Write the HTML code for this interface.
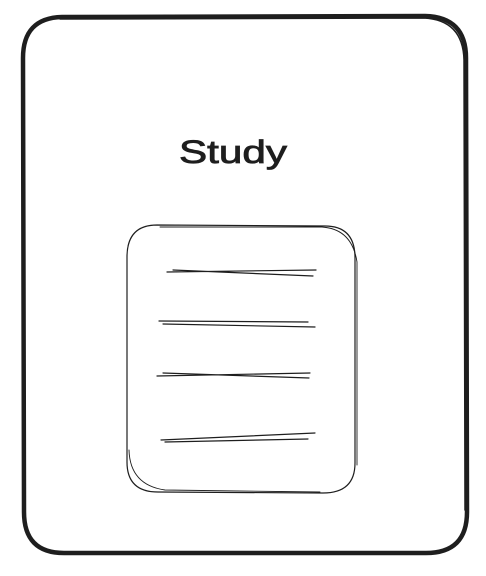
<!DOCTYPE html>
<html><head><style>html,body{margin:0;padding:0;background:#fff;width:486px;height:576px;overflow:hidden}</style></head>
<body>
<svg width="486" height="576" viewBox="0 0 486 576" xmlns="http://www.w3.org/2000/svg">
<g fill="none" stroke="#1e1e1e" stroke-linecap="round">
<path d="M62 17 L425 16 Q466 17 466 58 L467 512 Q467 553 426 553 L64 553 Q24 553 24 512 L23 58 Q23 18 62 17 Z" stroke-width="4.5"/>
<path d="M60 19 L424 18 Q463 20 464 60 L465 510" stroke-width="1.5"/>
<path d="M157 225 L325 226 Q355 226 355 258 L355 463 Q355 493 323 493 L158 492 Q127 492 127 462 L127 257 Q127 225 157 225 Z" stroke-width="1.2"/>
<path d="M160 227 L322 227 Q352 229 357 262 L357 465 M129 450 Q130 485 165 490 L320 492" stroke-width="0.9"/>
<path d="M167 272 L316 270 M173 270 L313 276" stroke-width="1.2"/>
<path d="M159 321 L308 322 M163 324 L315 327" stroke-width="1.2"/>
<path d="M157 376 L310 373 M163 373 L309 378" stroke-width="1.2"/>
<path d="M161 440 L315 433 M165 442 L308 439" stroke-width="1.2"/>
</g>
<text x="179" y="163" font-family="Liberation Sans, sans-serif" font-size="32" fill="#1e1e1e" stroke="#1e1e1e" stroke-width="0.8" textLength="108" lengthAdjust="spacingAndGlyphs">Study</text>
</svg>
</body></html>
